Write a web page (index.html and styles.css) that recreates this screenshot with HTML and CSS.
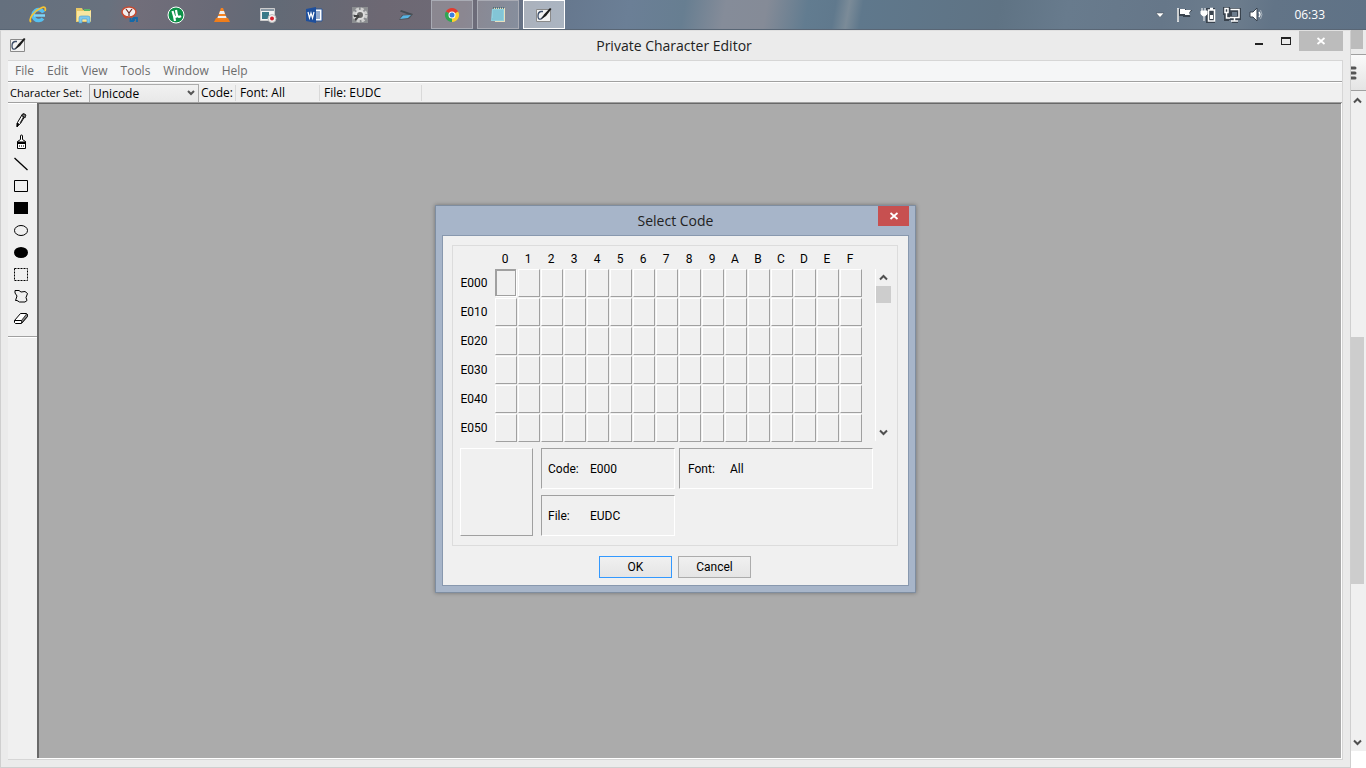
FILE: index.html
```html
<!doctype html>
<html lang="en">
  <head>
    <meta charset="utf-8" />
    <meta name="viewport" content="width=device-width" />
    <title>Private Character Editor</title>
    <link rel="stylesheet" href="styles.css">
  </head>
  <body>
    <header class="taskbar">
      <nav class="apps" aria-label="Taskbar">
        <button class="app" aria-label="Internet Explorer">
          <svg width="18" height="18" viewBox="0 0 18 18"><path d="M14.500 6.500A5.500 5.500 0 1 0 14 12.500" fill="none" stroke="#55c0f0" stroke-width="3.500"/><path d="M5 9.500h11" stroke="#7fd4f8" stroke-width="2.500"/><path d="M2 16C-1 13 5 5 12 2c4-2 5 0 4 3" fill="none" stroke="#f4c334" stroke-width="1.800"/></svg>
        </button>
        <button class="app" aria-label="File Explorer">
          <svg width="18" height="18" viewBox="0 0 18 18"><path d="M1 2h6l1 2h8v12H1z" fill="#e8c766"/><path d="M2 5h14v10H2z" fill="#f9e6a0"/><path d="M9 3h6v2H9z" fill="#5bb46a"/><path d="M4 17v-5q0-2 2-2h7q2 0 2 2v5h-3v-4H7v4z" fill="#7fc8ec" stroke="#4a9bc9" stroke-width=".6"/></svg>
        </button>
        <button class="app" aria-label="Snipping Tool">
          <svg width="18" height="18" viewBox="0 0 18 18"><ellipse cx="8" cy="6" rx="7" ry="5" fill="#f3eeee" stroke="#c8492f" stroke-width="1.500"/><path d="M5 3l3 4 3-4M8 7v3" fill="none" stroke="#6d2b24" stroke-width="1.200"/><path d="M2 10l3 3 2-3" fill="#c8492f"/><path d="M9.500 12v3H12v-3M13 15v-3h3v4" fill="none" stroke="#1469a8" stroke-width="1.800"/></svg>
        </button>
        <button class="app" aria-label="uTorrent">
          <svg width="18" height="18" viewBox="0 0 18 18"><circle cx="9" cy="9" r="8" fill="#0d9148" stroke="#fff"/><path d="M5.500 5l1.500 5q1 2 3 0L9 4M10 9q1 3 4 1M7 10l1 5" fill="none" stroke="#fff" stroke-width="2.200"/></svg>
        </button>
        <button class="app" aria-label="VLC">
          <svg width="18" height="18" viewBox="0 0 18 18"><path d="M3 12h12l2 4H1z" fill="#ef7d1a"/><path d="M8 2h2l4 11q-5 2-10 0z" fill="#f58220"/><path d="M7 5h4l1 3H6zM5 10h8l.500 2h-9z" fill="#eee"/></svg>
        </button>
        <button class="app" aria-label="Screen Recorder">
          <svg width="18" height="18" viewBox="0 0 18 18"><path d="M1.500 2.500h14v12h-14z" fill="#f4f4f4" stroke="#ccc"/><path d="M2 3h13v2H2z" fill="#8a99a5"/><path d="M3 6h7v7H3z" fill="#397a89"/><circle cx="13" cy="12.500" r="4" fill="#f3f3f3" stroke="#bbb"/><circle cx="13" cy="12.500" r="2" fill="#d8202c"/></svg>
        </button>
        <button class="app" aria-label="Word">
          <svg width="18" height="18" viewBox="0 0 18 18"><path d="M9 3h8v12H9z" fill="#fff" stroke="#2b579a"/><path d="M10 6h5M10 8h5M10 10h5M10 12h5" stroke="#2b579a"/><path d="M1 3l10-2v16L1 15z" fill="#1e4f9c"/><path d="M3 6l1.500 6L6 7l1.500 5L9 6" fill="none" stroke="#fff" stroke-width="1.200"/></svg>
        </button>
        <button class="app" aria-label="Settings">
          <svg width="18" height="18" viewBox="0 0 18 18"><path d="M1 1h16v16H1z" fill="#8b8d90"/><circle cx="9" cy="9" r="6" fill="none" stroke="#cfcfcf" stroke-width="3" stroke-dasharray="3 1.700"/><circle cx="9" cy="9" r="4" fill="#666" stroke="#ddd" stroke-width="2"/><path d="M3 10h5M4 14l4-4" stroke="#444" stroke-width="2"/></svg>
        </button>
        <button class="app" aria-label="Scanner">
          <svg width="18" height="18" viewBox="0 0 18 18"><path d="M4 4l12 4-2 1.500L3 5.500z" fill="#444b51"/><path d="M5 9l11-1-4 5-10 1z" fill="#4d5459"/><path d="M6 9.500l8-.500-3 3-8 1z" fill="#58b5e4"/></svg>
        </button>
        <button class="app open" aria-label="Chrome">
          <svg width="18" height="18" viewBox="0 0 18 18"><path d="M9 9L2.900 5.500A7 7 0 0 1 15.100 5.500z" fill="#e33b2e"/><path d="M9 9l6.100-3.500A7 7 0 0 1 9 16z" fill="#fbd12f"/><path d="M9 9v7A7 7 0 0 1 2.900 5.500z" fill="#31a552"/><circle cx="9" cy="9" r="3.500" fill="#fff"/><circle cx="9" cy="9" r="2.500" fill="#3b7de0"/></svg>
        </button>
        <button class="app open" aria-label="Notepad">
          <svg width="18" height="18" viewBox="0 0 18 18"><path d="M4 2h12v14H6z" fill="#e7dfbd"/><path d="M3 3h12v12H2z" fill="#8fd0df"/><path d="M4 5h10M4 7h10M4 9h10M4 11h10M3 13h11" stroke="#6eb3c5" stroke-width=".7"/><path d="M4 2h11" stroke="#3d6a75" stroke-width="1.500" stroke-dasharray="1 1"/></svg>
        </button>
        <button class="app open current" aria-label="Private Character Editor">
          <svg width="18" height="16" viewBox="0 0 18 16"><path d="M1.500 2.500h14v12h-14z" fill="#f2f2f2" stroke="#8a8a8a"/><path d="M8 4.500H6Q3 5 3 9q0 4 3 3l3-3" fill="none" stroke="#3c4d68" stroke-width="1.300"/><path d="M6 12.500l3-5L15 1l1.500 1L11 9z" fill="#1c1c1c"/></svg>
        </button>
      </nav>
      <div class="tray">
        <button class="tray-item" aria-label="Show hidden icons">
          <svg width="18" height="18" viewBox="0 0 18 18"><path d="M5 7h8l-4 4.500z" fill="#fff" stroke="#3d4650" stroke-width=".5"/></svg>
        </button>
        <button class="tray-item" aria-label="Action Center">
          <svg width="18" height="18" viewBox="0 0 18 18"><g stroke="#39434e" stroke-width="2" fill="#39434e"><path d="M3 3v12M5 4h5v1h5l-2 2 1 3H9V9H5z"/></g><path d="M3 2v14" stroke="#fff" stroke-width="1.500"/><path d="M5 3h5v1h6l-2 3 1 2h-5V8H5z" fill="#fff"/></svg>
        </button>
        <button class="tray-item" aria-label="Battery">
          <svg width="18" height="18" viewBox="0 0 18 18"><path d="M9 3h6v13H8V3z" fill="#39434e" stroke="#39434e" stroke-width="2"/><path d="M9.500 4h6v11h-6zM11 2.500h3" fill="none" stroke="#fff" stroke-width="1.500"/><path d="M11 9h3v4h-3z" fill="#fff"/><path d="M2 5h6v3q-1 2-3 2t-3-2zM3 2v3M6 2v3M5 9v6" fill="#fff" stroke="#fff"/></svg>
        </button>
        <button class="tray-item" aria-label="Network">
          <svg width="18" height="18" viewBox="0 0 18 18"><g fill="none" stroke="#39434e" stroke-width="4"><path d="M7 4h9v8H7zM9 15h6M2 3h3v4H2zM3 8v5h3"/></g><g fill="none" stroke="#fff" stroke-width="1.500"><path d="M7.500 3.500h8.500v8H7M11.500 12v3M8 15h7M2 2.500h3v4H2zM3.500 7v5H7"/></g></svg>
        </button>
        <button class="tray-item" aria-label="Volume">
          <svg width="18" height="18" viewBox="0 0 18 18"><path d="M3 6h3l4-4v13l-4-4H3z" fill="#fff" stroke="#39434e"/><path d="M12 6q2 2.500 0 5" fill="none" stroke="#fff" stroke-width="1.300"/><path d="M13.500 4q3 4.500 0 9" fill="none" stroke="#a9b3bd"/></svg>
        </button>
        <time class="clock">06:33</time>
      </div>
    </header>

    <div class="desktop">
      <main class="window">
        <div class="titlebar">
          <svg class="window-icon" width="18" height="16" viewBox="0 0 18 16"><path d="M1.500 2.500h14v12h-14z" fill="#f2f2f2" stroke="#8a8a8a"/><path d="M8 4.500H6Q3 5 3 9q0 4 3 3l3-3" fill="none" stroke="#3c4d68" stroke-width="1.300"/><path d="M6 12.500l3-5L15 1l1.500 1L11 9z" fill="#1c1c1c"/></svg>
          <h1 class="title">Private Character Editor</h1>
          <div class="window-controls">
            <button class="control" aria-label="Minimize">
              <svg width="10" height="10" viewBox="0 0 10 10"><path d="M1 7h8v2H1z" fill="#222"/></svg>
            </button>
            <button class="control" aria-label="Maximize">
              <svg width="10" height="10" viewBox="0 0 10 10"><path d="M0 1h10v8H0zM1 3v5h8V3z" fill="#222" fill-rule="evenodd"/></svg>
            </button>
            <button class="control close" aria-label="Close">
              <svg width="10" height="10" viewBox="0 0 10 10"><path d="M1.500 2l7 6M8.500 2l-7 6" stroke="#fff" stroke-width="1.800"/></svg>
            </button>
          </div>
        </div>

        <div class="client">
          <nav class="menubar" aria-label="Menu">
            <button class="menu">File</button>
            <button class="menu">Edit</button>
            <button class="menu">View</button>
            <button class="menu">Tools</button>
            <button class="menu">Window</button>
            <button class="menu">Help</button>
          </nav>

          <div class="infobar">
            <label class="charset-label" for="charset">Character Set:</label>
            <div class="combo">
              <select id="charset" class="combo-box">
                <option>Unicode</option>
              </select>
              <svg class="combo-arrow" width="8" height="6" viewBox="0 0 8 6"><path d="M1 1l3 3 3-3" fill="none" stroke="#555" stroke-width="2"/></svg>
            </div>
            <span class="info info-code">Code:</span>
            <span class="info info-font">Font: All</span>
            <span class="info info-file">File: EUDC</span>
          </div>

          <div class="editor">
            <div class="toolbox">
              <div class="tools">
                <button class="tool" aria-label="Pencil">
                  <svg width="16" height="16" viewBox="0 0 16 16"><path d="M4 14.500l.500-4 5-8.500q2-1 3 1l-5 8.500z" fill="#fff" stroke="#000"/><path d="M9 3q2-2 4 0l-1 3-3-2z" fill="#777" stroke="#000" stroke-width=".7"/><path d="M4 11l2 1-2 3zM7 11l4-7" stroke="#000" stroke-width=".8"/></svg>
                </button>
                <button class="tool" aria-label="Brush">
                  <svg width="16" height="16" viewBox="0 0 16 16"><path d="M7.500 5.500V2q0-1 1-1t1 1v3.500l3 2v7h-8v-7z" fill="#fff" stroke="#000"/><path d="M4 7.500h9V10H4z"/><path d="M6.500 11v2M8.500 11v2M10.500 11v2" stroke="#777"/></svg>
                </button>
                <button class="tool" aria-label="Straight line">
                  <svg width="16" height="16" viewBox="0 0 16 16"><path d="M1.500 2l13 12" stroke="#000" stroke-width="1.300"/></svg>
                </button>
                <button class="tool" aria-label="Hollow rectangle">
                  <svg width="16" height="16" viewBox="0 0 16 16"><path d="M1.500 2.500h13v11h-13z" fill="none" stroke="#000"/></svg>
                </button>
                <button class="tool" aria-label="Filled rectangle">
                  <svg width="16" height="16" viewBox="0 0 16 16"><path d="M1 2h14v12H1z"/></svg>
                </button>
                <button class="tool" aria-label="Hollow ellipse">
                  <svg width="16" height="16" viewBox="0 0 16 16"><ellipse cx="8" cy="8.500" rx="6.500" ry="5" fill="none" stroke="#000"/></svg>
                </button>
                <button class="tool" aria-label="Filled ellipse">
                  <svg width="16" height="16" viewBox="0 0 16 16"><ellipse cx="8" cy="8.500" rx="7" ry="5.500"/></svg>
                </button>
                <button class="tool" aria-label="Rectangular selection">
                  <svg width="16" height="16" viewBox="0 0 16 16"><path d="M1.500 2.500h13v12h-13z" fill="none" stroke="#000" stroke-dasharray="2 1"/></svg>
                </button>
                <button class="tool" aria-label="Freeform selection">
                  <svg width="16" height="16" viewBox="0 0 16 16"><path d="M2 2.500h4l2 1.500 4-.500 2.500 2-1.500 4 1 3-2 1.500H6.500L4 12.500H2.500L4 8 2 5z" fill="none" stroke="#000"/></svg>
                </button>
                <button class="tool" aria-label="Eraser">
                  <svg width="16" height="16" viewBox="0 0 16 16"><path d="M1.500 10.500l6-7h6l1 1v2l-6 7h-6l-1-1z" fill="#fff" stroke="#000"/><path d="M8.500 13v-2.500l5-6.500 1 .500v2z" fill="#888" stroke="#000" stroke-width=".7"/><path d="M1.500 10.500h7" stroke="#000"/></svg>
                </button>
              </div>
            </div>
            <div class="workspace"></div>
          </div>
        </div>

        <section class="dialog" role="dialog" aria-labelledby="dialog-title">
          <div class="dialog-bar">
            <h2 id="dialog-title" class="dialog-title">Select Code</h2>
            <button class="dialog-close" aria-label="Close">
              <svg width="10" height="10" viewBox="0 0 10 10"><path d="M1.500 2l7 6M8.500 2l-7 6" stroke="#fff" stroke-width="1.800"/></svg>
            </button>
          </div>
          <form class="dialog-body">
            <div class="group">
              <div class="picker">
                <table class="codes">
                  <thead><tr id="columns"><td></td></tr></thead>
                  <tbody id="rows"></tbody>
                </table>
                <div class="scrollbar">
                  <button type="button" class="scroll-arrow" aria-label="Scroll up">
                    <svg width="9" height="7" viewBox="0 0 9 7"><path d="M1 5.500L4.500 2 8 5.500" fill="none" stroke="#505050" stroke-width="2"/></svg>
                  </button>
                  <div class="scroll-thumb"></div>
                  <button type="button" class="scroll-arrow last" aria-label="Scroll down">
                    <svg width="9" height="7" viewBox="0 0 9 7"><path d="M1 1.500L4.500 5 8 1.500" fill="none" stroke="#505050" stroke-width="2"/></svg>
                  </button>
                </div>
              </div>
              <div class="details">
                <div class="preview"></div>
                <dl class="facts">
                  <div class="fact"><dt>Code:</dt><dd>E000</dd></div>
                  <div class="fact fact-font"><dt>Font:</dt><dd>All</dd></div>
                  <div class="fact"><dt>File:</dt><dd>EUDC</dd></div>
                </dl>
              </div>
            </div>
            <div class="actions">
              <button type="button" class="action default">OK</button>
              <button type="button" class="action">Cancel</button>
            </div>
          </form>
        </section>
      </main>

      <!-- edge of the browser window behind the editor -->
      <aside class="behind">
        <div class="behind-title"></div>
        <div class="behind-menu">
          <svg width="6" height="14" viewBox="0 0 6 14"><path d="M0 2h4M0 7h4M0 12h4" stroke="#555" stroke-width="3" stroke-linecap="round"/></svg>
        </div>
        <div class="behind-scroll">
          <svg class="behind-arrow" width="9" height="7" viewBox="0 0 9 7"><path d="M1 5.500L4.500 2 8 5.500" fill="none" stroke="#505050" stroke-width="2"/></svg>
          <div class="behind-track"><div class="behind-thumb"></div></div>
          <svg class="behind-arrow" width="9" height="7" viewBox="0 0 9 7"><path d="M1 1.500L4.500 5 8 1.500" fill="none" stroke="#505050" stroke-width="2"/></svg>
        </div>
      </aside>
    </div>

    <script>
      const columns = document.querySelector("#columns");
      const rows = document.querySelector("#rows");
      const digits = [..."0123456789ABCDEF"];

      digits.forEach((digit) => {
        const th = document.createElement("th");
        th.scope = "col";
        th.textContent = digit;
        columns.appendChild(th);
      });

      for (let code = 0xe000; code <= 0xe050; code += 16) {
        const tr = document.createElement("tr");
        const th = document.createElement("th");
        th.scope = "row";
        th.textContent = code.toString(16).toUpperCase();
        tr.appendChild(th);

        digits.forEach((digit, i) => {
          const td = document.createElement("td");
          const cell = document.createElement("button");
          cell.type = "button";
          cell.className = "cell";
          cell.setAttribute("aria-label", (code + i).toString(16).toUpperCase());
          td.appendChild(cell);
          tr.appendChild(td);
        });
        rows.appendChild(tr);
      }

      rows.querySelector(".cell").classList.add("selected");

      rows.addEventListener("click", (e) => {
        if (!e.target.matches(".cell")) return;
        rows.querySelector(".selected")?.classList.remove("selected");
        e.target.classList.add("selected");
        document.querySelector(".fact dd").textContent = e.target.getAttribute("aria-label");
      });
    </script>
  </body>
</html>
```
FILE: styles.css
```css
*, *::before, *::after {
  box-sizing: border-box;
}

html, body {
  margin: 0;
  padding: 0;
}

body {
  display: flex;
  flex-direction: column;
  height: 100vh;
  overflow: hidden;
  font: 12px/16px "Open Sans", "Noto Sans", sans-serif;
  color: #000;
}

button, select {
  margin: 0;
  padding: 0;
  border: 0;
  border-radius: 0;
  background: none;
  color: inherit;
  font: inherit;
}

svg {
  display: block;
}

h1, h2, dl, dd {
  margin: 0;
}

/* Taskbar */

.taskbar {
  display: flex;
  flex: none;
  justify-content: space-between;
  height: 30px;
  padding-left: 17px;
  border-bottom: 1px solid #596675;
  background: linear-gradient(100deg, #65707e 0, #68717e 8%, #716e7a 10%, #696a77 16%, #626a76 20%, #6d6873 28%, #6e6a76 34%, #65768c 40%, #6b7f96 46%, #677e91 50%, #858c99 53%, #858b97 56%, #627c90 59%, #60798d 61%, #7b8b98 62%, #5f788c 63%, #5f7384 73%, #687b8d 78%, #667789 85%, #6d7d8d 90%, #627487 93%, #5f7286 100%);
}

.apps {
  display: flex;
  gap: 4px;
}

.app {
  display: grid;
  place-items: center;
  width: 42px;
  height: 29px;
}

.open {
  border: 1px solid #a9abb4;
  background: rgb(255 255 255 / 20%);
}

.current {
  border-color: #fff;
  background: rgb(255 255 255 / 45%);
}

.tray {
  display: flex;
  align-items: center;
  padding-right: 41px;
  color: #fff;
}

.tray-item {
  display: grid;
  place-items: center;
  width: 24px;
  height: 28px;
}

.clock {
  margin-left: 26px;
}

/* Editor window */

.desktop {
  display: flex;
  flex: 1;
  min-height: 0;
}

.window {
  position: relative;
  display: flex;
  flex: 1;
  flex-direction: column;
  padding: 0 7px 7px;
  border: 1px solid #cfcfcf;
  border-top-color: #e0e0e0;
  background: #ebebeb;
}

.titlebar {
  display: grid;
  grid-template-columns: 120px 1fr 120px;
  height: 29px;
}

.window-icon {
  margin: 6px 0 0 1px;
}

.title, .dialog-title {
  color: #222;
  font-size: 14px;
  font-weight: 400;
  line-height: 30px;
  text-align: center;
}

.title {
  padding-right: 3px;
}

.window-controls {
  display: flex;
  align-items: flex-start;
  justify-content: flex-end;
}

.control {
  display: grid;
  place-items: center;
  width: 27px;
  height: 20px;
}

.close {
  width: 44px;
}

.client {
  display: flex;
  flex: 1;
  flex-direction: column;
  border: 1px solid #d6d6d6;
  border-left: 0;
  background: #f0f0f0;
}

.close {
  background: #bcbcbc;
}

.menubar {
  display: flex;
  gap: 13px;
  height: 21px;
  padding-left: 7px;
  border-bottom: 1px solid #a0a0a0;
  background: #f5f6f7;
  color: #6d6d6d;
}

.menu {
  height: 20px;
}

.infobar {
  display: flex;
  align-items: center;
  height: 21px;
  padding-top: 1px;
  border-top: 1px solid #fff;
  border-bottom: 1px solid #a0a0a0;
}

.charset-label {
  width: 81px;
  padding-left: 2px;
  font-size: 11px;
  white-space: nowrap;
}

.combo {
  display: grid;
  width: 110px;
}

.combo-box {
  grid-area: 1 / 1;
  height: 18px;
  padding-left: 3px;
  border: 1px solid #acacac;
  border-bottom: 0;
  background: linear-gradient(#f1f1f1, #e8e8e8);
  appearance: none;
}

.combo-arrow {
  grid-area: 1 / 1;
  place-self: center end;
  margin-right: 4px;
  pointer-events: none;
}

.info {
  padding-left: 4px;
  border-right: 1px solid #d9d9d9;
  white-space: nowrap;
}

.info-code {
  width: 37px;
  padding-left: 2px;
}

.info-font {
  width: 84px;
}

.info-file {
  width: 102px;
}

.editor {
  display: flex;
  flex: 1;
  padding: 0 1px 1px 0;
}

.toolbox {
  width: 29px;
  border-top: 1px solid #fff;
}

.tools {
  display: grid;
  justify-items: center;
  padding: 5px 3px 7px 0;
  border-bottom: 1px solid #a0a0a0;
  box-shadow: 0 1px #fff;
}

.tool {
  display: grid;
  place-items: center;
  width: 24px;
  height: 22px;
}

.workspace {
  flex: 1;
  border-top: 1px solid #696969;
  border-left: 2px solid #696969;
  background: #ababab;
  box-shadow: 1px 1px #fff;
}

/* Select Code dialog */

.dialog {
  position: absolute;
  inset: 0;
  width: fit-content;
  height: fit-content;
  margin: auto;
  padding: 0 6px 6px;
  border: 1px solid #7e8da0;
  background: #a7b5c9;
  box-shadow: 0 0 4px rgb(0 0 0 / 35%);
  font: 12px/16px Roboto, "Liberation Sans", sans-serif;
}

.dialog-bar {
  display: grid;
  grid-template-columns: 1fr 31px;
  align-items: start;
  height: 29px;
}

.dialog-title {
  padding-left: 31px;
  font-family: "Open Sans", "Noto Sans", sans-serif;
}

.dialog-close {
  display: grid;
  place-items: center;
  height: 20px;
  background: #c75050;
}

.dialog-body {
  padding: 9px 10px 7px 9px;
  border: 1px solid #8898ae;
  background: #f0f0f0;
}

.group {
  padding: 1px 6px 9px 0;
  border: 1px solid #dcdcdc;
}

.picker {
  display: flex;
  gap: 12px;
}

.codes {
  border-collapse: collapse;
}

.codes th, .codes td {
  padding: 0;
  font-weight: 400;
}

.codes thead {
  height: 22px;
}

.codes thead th {
  padding: 2px 3px 0 0;
}

.codes thead td {
  width: 42px;
}

.codes tbody th {
  height: 29px;
  padding-bottom: 2px;
}

.cell {
  display: block;
  width: 22px;
  height: 28px;
  margin: 0 1px 1px 0;
  border: 1px solid;
  border-color: #fff #a0a0a0 #a0a0a0 #fff;
}

.selected {
  width: 21px;
  height: 27px;
  margin: 0 2px 2px 0;
  border: 1px solid #a0a0a0;
  border-width: 2px 1px 1px 2px;
  box-shadow: 1px 1px #fff;
}

.scrollbar {
  display: flex;
  flex-direction: column;
  width: 16px;
  margin: 22px 0 2px;
  border-left: 1px solid #fff;
}

.scroll-arrow {
  display: grid;
  place-items: center;
  height: 17px;
}

.last {
  margin-top: auto;
}

.scroll-thumb {
  height: 17px;
  background: #cdcdcd;
}

.details {
  display: flex;
  gap: 8px;
  padding: 5px 0 0 7px;
}

.preview {
  width: 73px;
  border: 1px solid;
  border-color: #fff #a0a0a0 #a0a0a0 #fff;
}

.facts {
  display: grid;
  grid-template-columns: 134px 194px;
  gap: 6px 4px;
}

.fact {
  display: grid;
  grid-template-columns: 42px 1fr;
  align-items: center;
  height: 41px;
  padding-left: 6px;
  border: 1px solid;
  border-color: #a0a0a0 #fff #fff #a0a0a0;
}

.fact-font {
  padding-left: 8px;
}

.actions {
  display: flex;
  gap: 6px;
  justify-content: center;
  padding-top: 10px;
}

.action {
  width: 73px;
  height: 22px;
  border: 1px solid #acacac;
  background: linear-gradient(#f0f0f0, #e5e5e5);
}

.default {
  border-color: #3399ff;
}

/* Window behind */

.behind {
  display: flex;
  flex-direction: column;
  width: 15px;
  padding-bottom: 17px;
  background: #fff;
}

.behind-title {
  height: 24px;
  border-right: 3px solid #ebebeb;
  border-bottom: 5px solid #ebebeb;
  background: #bcbcbc;
}

.behind-menu {
  display: grid;
  align-items: center;
  height: 37px;
  border-top: 1px solid #a0a0a0;
  border-bottom: 1px solid #a0a0a0;
  background: linear-gradient(#fafafa, #e4e4e4);
}

.behind-scroll {
  display: flex;
  flex: 1;
  flex-direction: column;
  align-items: center;
  padding: 6px 2px 5px 0;
  background: #f0f0f0;
}

.behind-track {
  display: grid;
  flex: 1;
  grid-template-rows: 233fr 248fr 155fr;
  width: 100%;
}

.behind-thumb {
  grid-row: 2;
  background: #cdcdcd;
}
```
